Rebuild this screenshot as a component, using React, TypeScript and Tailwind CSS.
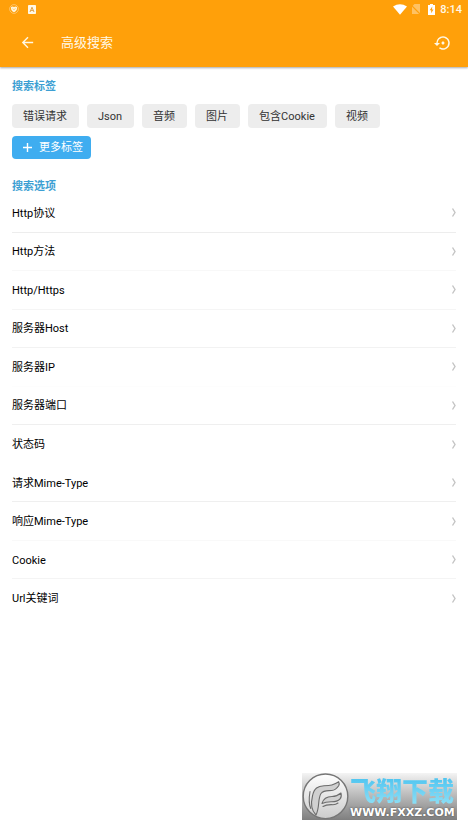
import React from "react";
import { MdArrowBack, MdSettingsBackupRestore } from "react-icons/md";

const tags = ["错误请求", "Json", "音频", "图片", "包含Cookie", "视频"];

const options = [
  { label: "Http协议", line: "border-[#ededed]" },
  { label: "Http方法", line: "border-[#f8f8f8]" },
  { label: "Http/Https", line: "border-[#f5f5f5]" },
  { label: "服务器Host", line: "border-[#f2f2f2]" },
  { label: "服务器IP", line: "border-[#fdfdfd]" },
  { label: "服务器端口", line: "border-[#efefef]" },
  { label: "状态码", line: "border-white" },
  { label: "请求Mime-Type", line: "border-[#efefef]" },
  { label: "响应Mime-Type", line: "border-[#f9f9f9]" },
  { label: "Cookie", line: "border-[#f4f4f4]" },
  { label: "Url关键词", line: "border-white" },
];

const StatusBar = () => {
  return (
    <div className="flex h-[18px] items-center justify-between pl-[9px] pr-[6px]">
      <div className="flex items-center gap-[9px]">
        <svg viewBox="0 0 10 10" className="size-[10px]">
          <circle cx="5" cy="5" r="4.4" fill="none" stroke="#ffd08a" strokeWidth="0.7" />
          <path d="M2 2.900 3.500 2.500 5 3l1.500-.5L8 2.900v2C7.700 6.600 6.300 7.400 5 8.200 3.700 7.400 2.300 6.600 2 4.900z" fill="#fff3d6" />
          <path d="M3.800 4.600 5 5.800l1.400-1.500" fill="none" stroke="#ffb545" strokeWidth="0.7" />
        </svg>
        <svg viewBox="0 0 8 9" className="h-[9px] w-[8px]">
          <rect width="8" height="9" rx="0.8" fill="#fff8e6" />
          <path d="M2 7 4 2.200 6 7M2.800 5.400h2.400" fill="none" stroke="#e0a24a" strokeWidth="1" />
        </svg>
      </div>
      <div className="flex items-center">
        <svg viewBox="0 0 14 11" className="h-[11px] w-[14px]">
          <path d="M0 2.500Q7-2 14 2.500L7 10.800z" fill="#fff" />
        </svg>
        <svg viewBox="0 0 10 10" className="ml-[4px] size-[10px]">
          <path d="M3.500 0H9v10H1V2.500z" fill="#ffc263" />
          <path d="M0 1l9 9" stroke="#ffa00a" strokeWidth="1.200" />
        </svg>
        <svg viewBox="0 0 7 11" className="ml-[7px] h-[11px] w-[7px]">
          <path d="M2 0h3v1h2v10H0V1h2z" fill="#fff" />
          <path d="M4.300 2.500 1.700 6.200h1.500v3L5.500 5.400H4z" fill="#ffa00a" />
        </svg>
        <span className="ml-[5px] pt-px text-[11px] leading-[18px] font-medium">8:14</span>
      </div>
    </div>
  );
};

const Watermark = () => {
  return (
    <div className="flex h-[47px] w-[155px] items-center overflow-hidden bg-linear-to-b from-[#f4f4f4] to-[#7f7f7f]">
      <svg viewBox="0 0 48 47" className="h-[47px] w-[48px] shrink-0">
        <defs>
          <linearGradient id="disc" x1="0" y1="0" x2="0" y2="1">
            <stop offset="0" stopColor="#ffffff" />
            <stop offset="1" stopColor="#cccccc" />
          </linearGradient>
        </defs>
        <circle cx="23.500" cy="23.300" r="22.300" fill="url(#disc)" stroke="#767676" strokeWidth="1.400" />
        <g fill="#d0d0d0" stroke="#6c6c6c" strokeWidth="1.100" strokeLinejoin="round" strokeLinecap="round">
          <path d="M14 42C9 37 9 29 10.500 23 12 15 16 13 22 12.700c7 0 9-.5 14.700-4 .8 1.500.5 3 0 4-2 3-4 4.500-7 4.800-5 .3-8-.5-10.700 3C15.500 26 18 34 14 42z" />
          <path d="M20 30.500c1.500-5.500 5-7 10-7 4 0 6-1 9-3.500.7 3 .3 4.500-1 6-3 3-6 2.800-9 2.800-4 0-6 .2-9 1.700z" />
          <path d="M21 33.500c3-2 6-2 10-1.800 2 0 3.500-.5 5-1.700" fill="none" />
          <path d="M8 18.500c-1 6-1.500 12 .8 17" fill="none" />
        </g>
      </svg>
      <div className="flex flex-col pt-1">
        <span className="bg-linear-to-b from-[#4fc5f0] to-[#8fe0f5] bg-clip-text text-[26px] leading-[28px] font-black whitespace-nowrap text-transparent">
          飞翔下载
        </span>
        <span className="font-['DejaVu_Sans'] text-[11px] leading-[14px] font-bold whitespace-nowrap text-white [text-shadow:0_0_2px_#444]">
          WWW.FXXZ.COM
        </span>
      </div>
    </div>
  );
};

const App = () => {
  return (
    <div className="flex min-h-screen flex-col bg-white font-[Roboto,'Noto_Sans_CJK_SC',sans-serif]">
      <header className="h-[67px] bg-[#ffa00a] text-[#fff8e6] shadow-[0_1px_2px_rgba(0,0,0,0.35)]">
        <StatusBar />
        <div className="flex h-[49px] items-center pr-4 pl-[19px]">
          <button type="button" aria-label="返回">
            <MdArrowBack size={17} />
          </button>
          <h1 className="ml-[25px] text-[13px] leading-5">高级搜索</h1>
          <button type="button" aria-label="重置" className="ml-auto">
            <MdSettingsBackupRestore size={18} />
          </button>
        </div>
      </header>

      <main className="px-3">
        {/* Search tags */}
        <h2 className="mt-3 text-[11px] leading-4 font-bold text-[#3d9fd3]">搜索标签</h2>
        <div className="mt-[9px] flex flex-wrap gap-2">
          {tags.map((tag) => (
            <button
              key={tag}
              type="button"
              className="h-6 rounded bg-[#ededed] pt-px pr-3 pl-[11px] text-[11px] leading-6 text-[#333]"
            >
              {tag}
            </button>
          ))}
        </div>
        <button
          type="button"
          className="mt-2 flex h-[23px] items-center rounded bg-[#3fadf0] pr-2 pl-[11px] text-[11px] leading-6 text-white"
        >
          <svg viewBox="0 0 9 9" className="mr-[7px] size-[9px]">
            <path d="M4.500 0v9M0 4.500h9" stroke="#fff" strokeWidth="1.400" />
          </svg>
          更多标签
        </button>

        {/* Search options */}
        <h2 className="mt-5 text-[11px] leading-4 font-bold text-[#3d9fd3]">搜索选项</h2>
        <ul className="-mt-px grid h-[424px] auto-rows-fr">
          {options.map(({ label, line }) => (
            <li key={label} className={`border-b ${line}`}>
              <button
                type="button"
                className="flex h-full w-full items-center justify-between text-left text-[11px] leading-4 text-black"
              >
                <span className="pt-[2px]">{label}</span>
                <svg viewBox="0 0 5 9" className="h-[9px] w-[5px]">
                  <path d="M1.500 .5 4 4.500 1.500 8.500" fill="none" stroke="#c4c4c4" strokeWidth="1.400" />
                </svg>
              </button>
            </li>
          ))}
        </ul>
      </main>

      <footer className="mt-auto flex justify-end pr-[11px] pb-3">
        <Watermark />
      </footer>
    </div>
  );
};

export default App;
